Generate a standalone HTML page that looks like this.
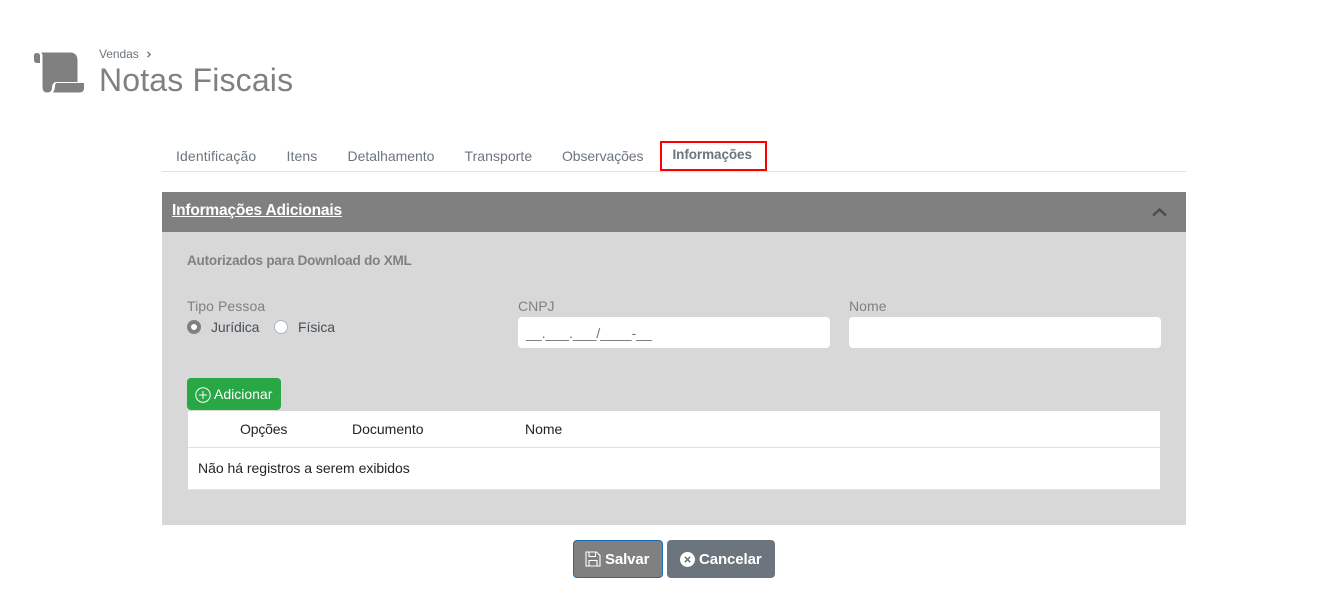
<!DOCTYPE html>
<html lang="pt-BR">
<head>
<meta charset="utf-8">
<title>Notas Fiscais</title>
<style>
html,body{margin:0;padding:0;background:#fff}
body{width:1341px;height:597px;position:relative;overflow:hidden;font-family:"Liberation Sans",Arial,sans-serif;font-size:14px}
.a{position:absolute;white-space:nowrap}
.t{line-height:20px;color:#6c757d}
.lab{color:#808080;line-height:20px}
.th{color:#212529;line-height:20px}
</style>
</head>
<body>
<svg class="a" style="left:33px;top:52px" width="52" height="42" viewBox="0 0 52 42">
<path fill="#808080" d="M1 3.500C1 1.500 2.500 1 4 1C6 1 7 2 7 4V11H4C2 11 1 9.500 1 8Z"/>
<path fill="#808080" d="M8 0.500H37C42 0.500 44.500 3.500 44.500 8.500V30H24C20 30 19 33 19 36C19 39 17 40.500 14 40.500C11 40.500 9.500 38.500 9.500 35V5C9.500 3 9.500 1.500 8 0.500Z"/>
<path fill="#808080" d="M24 31H51V36C51 39 49.500 40.500 46 40.500H20C21 39 22 36.500 22 34.500C22 32.500 22.800 31 24 31Z"/>
</svg>
<div class="a" style="left:99px;top:46px;font-size:12px;line-height:16px;color:#6c757d;letter-spacing:-.05px">Vendas</div>
<svg class="a" style="left:146px;top:51px" width="6" height="7" viewBox="0 0 6 7"><path d="M1.500 .8L4.200 3.500L1.500 6.200" fill="none" stroke="#6c757d" stroke-width="1.300"/></svg>
<div class="a" style="left:99px;top:61px;font-size:32px;line-height:38px;color:#808080;letter-spacing:.17px">Notas Fiscais</div>

<div class="a t" style="left:176px;top:146px;letter-spacing:.13px">Identificação</div>
<div class="a t" style="left:286.500px;top:146px;letter-spacing:.1px">Itens</div>
<div class="a t" style="left:347.500px;top:146px;letter-spacing:-.02px">Detalhamento</div>
<div class="a t" style="left:464.500px;top:146px;letter-spacing:.05px">Transporte</div>
<div class="a t" style="left:562px;top:146px;letter-spacing:-.1px">Observações</div>
<div class="a" style="left:162px;top:171px;width:1024px;height:1px;background:#dee2e6"></div>
<div class="a" style="left:660px;top:141px;width:107px;height:30px;box-sizing:border-box;border:2px solid #f00;background:#fff"></div>
<div class="a" style="left:672.500px;top:145px;font-weight:bold;line-height:20px;color:#6c757d;letter-spacing:-.08px;font-size:13.500px">Informações</div>

<div class="a" style="left:162px;top:192px;width:1024px;height:40px;background:#808080"></div>
<div class="a" style="left:172px;top:201px;font-weight:bold;line-height:19px;color:#fff;text-decoration:underline;letter-spacing:-.2px;font-size:15.500px">Informações Adicionais</div>
<svg class="a" style="left:1151px;top:206px" width="17" height="12" viewBox="0 0 17 12"><path d="M2 9.500L8.500 3.500L15 9.500" fill="none" stroke="#4c4c4c" stroke-width="2.400"/></svg>

<div class="a" style="left:162px;top:232px;width:1024px;height:293px;background:#d8d8d8"></div>
<div class="a" style="left:187px;top:252px;font-weight:bold;font-size:13.500px;line-height:18px;color:#808080;letter-spacing:-.2px">Autorizados para Download do XML</div>

<div class="a lab" style="left:187px;top:296px;letter-spacing:.08px">Tipo Pessoa</div>
<div class="a" style="left:187px;top:320px;width:14px;height:14px;box-sizing:border-box;border-radius:50%;border:4px solid #808080;background:#fff"></div>
<div class="a" style="left:211px;top:317px;line-height:20px;color:#495057;letter-spacing:-.08px">Jurídica</div>
<div class="a" style="left:274px;top:320px;width:14px;height:14px;box-sizing:border-box;border-radius:50%;border:1px solid #adb5bd;background:#fff"></div>
<div class="a" style="left:298px;top:317px;line-height:20px;color:#495057;letter-spacing:-.05px">Física</div>

<div class="a lab" style="left:518px;top:296px">CNPJ</div>
<div class="a" style="left:518px;top:317px;width:312px;height:31px;background:#fff;border-radius:4px"></div>
<div class="a" style="left:526px;top:323px;font-size:14px;line-height:20px;color:#6c757d;letter-spacing:.03px">__.___.___/____-__</div>
<div class="a lab" style="left:849px;top:296px;letter-spacing:.05px">Nome</div>
<div class="a" style="left:849px;top:317px;width:312px;height:31px;background:#fff;border-radius:4px"></div>

<div class="a" style="left:187px;top:378px;width:94px;height:32px;background:#28a745;border-radius:4px"></div>
<svg class="a" style="left:195px;top:387px" width="16" height="16" viewBox="0 0 16 16"><circle cx="8" cy="8" r="7.200" fill="none" stroke="#fff" stroke-width="1"/><path d="M8 4V12M4 8H12" stroke="#fff" stroke-width="1" fill="none"/></svg>
<div class="a" style="left:214px;top:384px;line-height:20px;color:#fff;letter-spacing:0">Adicionar</div>

<div class="a" style="left:188px;top:411px;width:972px;height:78px;background:#fff"></div>
<div class="a" style="left:188px;top:447px;width:972px;height:1px;background:#dee2e6"></div>
<div class="a" style="left:187px;top:489px;width:974px;height:1px;background:#dee2e6"></div>
<div class="a th" style="left:240px;top:419px;letter-spacing:-.18px">Opções</div>
<div class="a th" style="left:352px;top:419px;letter-spacing:0">Documento</div>
<div class="a th" style="left:525px;top:419px;letter-spacing:0">Nome</div>
<div class="a th" style="left:198px;top:458px;letter-spacing:-.02px">Não há registros a serem exibidos</div>

<div class="a" style="left:573px;top:540px;width:90px;height:38px;box-sizing:border-box;background:#808080;border:1px solid #1c6cb5;border-radius:4px"></div>
<svg class="a" style="left:585px;top:551px" width="16" height="16" viewBox="0 0 16 16"><path d="M1 1H11.500L15 4.500V15H1Z" fill="none" stroke="#fff" stroke-width="1.100"/><path d="M4 1V5.500H10.500V1M4 15V9.500H12V15" fill="none" stroke="#fff" stroke-width="1.100"/></svg>
<div class="a" style="left:605px;top:550px;font-weight:bold;font-size:15px;line-height:20px;color:#fff;letter-spacing:-.12px">Salvar</div>
<div class="a" style="left:667px;top:540px;width:108px;height:38px;background:#6c757d;border-radius:4px"></div>
<svg class="a" style="left:680px;top:552px" width="15" height="15" viewBox="0 0 15 15"><circle cx="7.500" cy="7.500" r="7.500" fill="#fff"/><path d="M4.800 4.800L10.200 10.200M10.200 4.800L4.800 10.200" stroke="#6c757d" stroke-width="1.500"/></svg>
<div class="a" style="left:699px;top:550px;font-weight:bold;font-size:15px;line-height:20px;color:#fff;letter-spacing:-.1px">Cancelar</div>
</body>
</html>
